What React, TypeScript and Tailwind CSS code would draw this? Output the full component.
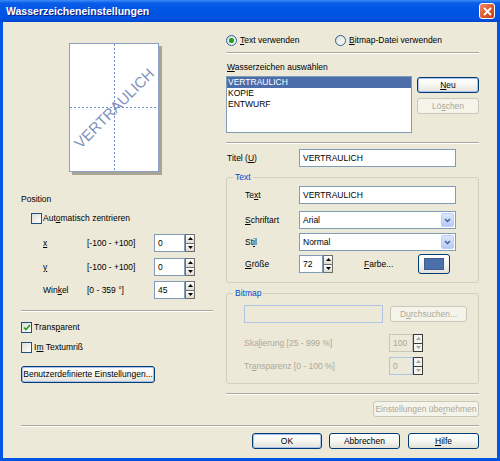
import React from "react";
import clsx from "clsx";

const U = ({ c }: { c: string }) => <span className="underline underline-offset-1">{c}</span>;

function Btn({
  children,
  className = "",
  disabled,
  focus,
}: {
  children: React.ReactNode;
  className?: string;
  disabled?: boolean;
  focus?: boolean;
}) {
  return (
    <div
      className={clsx(
        "flex items-center justify-center rounded-[3px] border whitespace-nowrap",
        disabled
          ? "border-[#C9C7BA] bg-[#F5F4EA] text-[#ACA899]"
          : "border-[#003C74] bg-gradient-to-b from-white via-[#F6F6F2] to-[#E2E1D8] text-black",
        focus && !disabled && "shadow-[inset_0_0_0_1px_#A9C3EE]",
        className
      )}
    >
      {children}
    </div>
  );
}

function Check({ checked }: { checked?: boolean }) {
  return (
    <div className="w-[11px] h-[11px] shrink-0 border border-[#1C5180] bg-gradient-to-br from-[#DCDCD7] to-white flex items-center justify-center">
      {checked && (
        <svg width="8" height="7" viewBox="0 0 8 7">
          <path d="M1 3.5L3 5.5L7 1" stroke="#21A121" strokeWidth="1.7" fill="none" />
        </svg>
      )}
    </div>
  );
}

function Radio({ checked }: { checked?: boolean }) {
  return (
    <div className="w-[11px] h-[11px] shrink-0 rounded-full border border-[#2F5E95] bg-gradient-to-br from-[#DCDCD7] to-white flex items-center justify-center">
      {checked && <div className="w-[5px] h-[5px] rounded-full bg-[#21A121] shadow-[0_0_1px_#7FD07F]" />}
    </div>
  );
}

function Spin({ disabled }: { disabled?: boolean }) {
  const box = disabled
    ? "border-[#3C3C3C] bg-[#F4F3EE]"
    : "border-[#707070] bg-gradient-to-b from-white to-[#DEDBCF]";
  const fill = disabled ? "#ACA899" : "#000";
  return (
    <div className="flex flex-col w-[10px] h-[18px] shrink-0">
      <div className={clsx("flex-1 border flex items-center justify-center", box)}>
        <svg width="5" height="3" viewBox="0 0 5 3">
          <path d="M2.5 0L5 3H0z" fill={fill} />
        </svg>
      </div>
      <div className={clsx("flex-1 border border-t-0 flex items-center justify-center", box)}>
        <svg width="5" height="3" viewBox="0 0 5 3">
          <path d="M0 0H5L2.5 3z" fill={fill} />
        </svg>
      </div>
    </div>
  );
}

function Select({ value }: { value: string }) {
  return (
    <div className="w-[157px] h-[18px] border border-[#7F9DB9] bg-white flex items-center pl-[3px]">
      <span className="flex-1">{value}</span>
      <div className="w-[13px] h-[14px] mr-[1px] rounded-[2px] border border-[#BCCEF5] bg-gradient-to-b from-[#DCE7FD] to-[#B6CAF6] flex items-center justify-center">
        <svg width="7" height="5" viewBox="0 0 7 5">
          <path d="M1 1L3.5 3.5L6 1" stroke="#4D6185" strokeWidth="1.5" fill="none" />
        </svg>
      </div>
    </div>
  );
}

function Sep({ className = "" }: { className?: string }) {
  return <div className={clsx("h-[2px] border-t border-b border-t-[#ACA899] border-b-white", className)} />;
}

function Field({ children, className = "" }: { children?: React.ReactNode; className?: string }) {
  return (
    <div className={clsx("h-[18px] border border-[#7F9DB9] bg-white flex items-center pl-[3px]", className)}>
      {children}
    </div>
  );
}

export default function App() {
  return (
    <div className="w-[500px] h-[461px] flex flex-col bg-[#0055E5] font-['Liberation_Sans',Arial,sans-serif] text-[8.5px] leading-[11px] text-black">
      {/* title bar */}
      <div className="h-[22px] shrink-0 flex items-center pl-[6px] pr-[5px] bg-[linear-gradient(180deg,#3D8CF8_0%,#0A5DE8_14%,#0055E5_50%,#0053E2_85%,#0046CC_100%)]">
        <span className="flex-1 text-white font-bold text-[10.5px] [text-shadow:1px_1px_0_#0A1E80]">
          Wasserzeicheneinstellungen
        </span>
        <div className="w-[16px] h-[16px] rounded-[3px] border border-white bg-gradient-to-br from-[#EE8A6A] via-[#E05A2E] to-[#C53A17] flex items-center justify-center">
          <svg width="9" height="9" viewBox="0 0 9 9">
            <path d="M1 1L8 8M8 1L1 8" stroke="white" strokeWidth="1.8" />
          </svg>
        </div>
      </div>

      {/* body */}
      <div className="flex-1 mx-[3px] mb-[3px] bg-[#ECE9D8] px-[18px] flex flex-col">
        <div className="h-[403px] flex gap-[13px]">
          {/* left column */}
          <div className="w-[192px] flex flex-col">
            <div className="mt-[21px] ml-[48px] w-[90px] h-[129px] relative bg-white border border-[#8A9EC4] shadow-[3px_3px_0_#A8A596]">
              <svg className="absolute inset-0" width="88" height="127">
                <line x1="44.5" y1="0" x2="44.5" y2="127" stroke="#6F8FCF" strokeDasharray="2 2" />
                <line x1="0" y1="63.5" x2="88" y2="63.5" stroke="#6F8FCF" strokeDasharray="2 2" />
              </svg>
              <span className="absolute left-1/2 top-1/2 -translate-x-1/2 -translate-y-1/2 -rotate-45 text-[15px] leading-[15px] text-[#8193BD] whitespace-nowrap">
                VERTRAULICH
              </span>
            </div>

            <div className="mt-[22px] h-[11px]">Position</div>

            <div className="mt-[8px] h-[11px] ml-[10px] flex items-center gap-[1px]">
              <Check />
              <span>
                Aut<U c="o" />matisch zentrieren
              </span>
            </div>

            {[
              { l: <U c="x" />, r: "[-100 - +100]", v: "0", mt: "mt-[10px]" },
              { l: <U c="y" />, r: "[-100 - +100]", v: "0", mt: "mt-[6px]" },
              {
                l: (
                  <>
                    Win<U c="k" />el
                  </>
                ),
                r: "[0 - 359 °]",
                v: "45",
                mt: "mt-[5px]",
              },
            ].map((row, i) => (
              <div key={i} className={clsx("h-[18px] flex items-center", row.mt)}>
                <span className="ml-[22px] w-[44px]">{row.l}</span>
                <span className="w-[67px]">{row.r}</span>
                <Field className="w-[31px]">{row.v}</Field>
                <Spin />
              </div>
            ))}

            <Sep className="mt-[11px]" />

            <div className="mt-[10px] h-[11px] flex items-center gap-[2px]">
              <Check checked />
              <span>
                Trans<U c="p" />arent
              </span>
            </div>
            <div className="mt-[9px] h-[11px] flex items-center gap-[2px]">
              <Check />
              <span>
                I<U c="m" /> Textumriß
              </span>
            </div>

            <Btn focus className="mt-[13px] w-[134px] h-[17px]">
              Benutzerdefinierte Einstellungen...
            </Btn>
          </div>

          {/* right column */}
          <div className="w-[253px] flex flex-col">
            <div className="mt-[13px] h-[11px] flex items-center">
              <div className="w-[109px] flex items-center gap-[3px]">
                <Radio checked />
                <span>
                  <U c="T" />ext verwenden
                </span>
              </div>
              <div className="flex items-center gap-[3px]">
                <Radio />
                <span>
                  <U c="B" />itmap-Datei verwenden
                </span>
              </div>
            </div>

            <Sep className="mt-[6px]" />

            <div className="mt-[8px] h-[11px] pl-[1px]">
              <U c="W" />asserzeichen auswählen
            </div>

            <div className="mt-[3px] flex">
              <div className="w-[186px] h-[57px] border border-[#7F9DB9] bg-white flex flex-col">
                <div className="h-[11px] pl-[1px] bg-[#4B6DAA] text-white">VERTRAULICH</div>
                <div className="h-[11px] pl-[1px]">KOPIE</div>
                <div className="h-[11px] pl-[1px]">ENTWURF</div>
              </div>
              <div className="ml-[5px] w-[62px] flex flex-col">
                <Btn focus className="mt-[1px] h-[16px]">
                  <U c="N" />eu
                </Btn>
                <Btn disabled className="mt-[5px] h-[16px]">
                  Lö<U c="s" />chen
                </Btn>
              </div>
            </div>

            <Sep className="mt-[9px]" />

            <div className="mt-[5px] h-[18px] flex items-center">
              <span className="w-[73px] pl-[1px]">
                Titel (<U c="U" />)
              </span>
              <Field className="w-[157px]">VERTRAULICH</Field>
            </div>

            <fieldset className="mt-[5px] border border-[#D0D0BF] rounded-[3px] pb-[9px]">
              <legend className="ml-[6px] px-[2px] h-[11px] text-[#0046D5]">Text</legend>
              <div className="mt-[3px] h-[18px] flex items-center">
                <span className="w-[72px] pl-[18px]">
                  Te<U c="x" />t
                </span>
                <Field className="w-[157px]">VERTRAULICH</Field>
              </div>
              <div className="mt-[7px] h-[18px] flex items-center">
                <span className="w-[72px] pl-[18px]">
                  <U c="S" />chriftart
                </span>
                <Select value="Arial" />
              </div>
              <div className="mt-[4px] h-[18px] flex items-center">
                <span className="w-[72px] pl-[18px]">
                  St<U c="i" />l
                </span>
                <Select value="Normal" />
              </div>
              <div className="mt-[4px] h-[18px] flex items-center">
                <span className="w-[72px] pl-[18px]">
                  <U c="G" />röße
                </span>
                <Field className="w-[24px]">72</Field>
                <Spin />
                <span className="ml-[31px] w-[54px]">
                  <U c="F" />arbe...
                </span>
                <Btn className="w-[32px] h-[20px]">
                  <div className="w-[20px] h-[12px] bg-[#4A6FA9] border border-[#3E5E92]" />
                </Btn>
              </div>
            </fieldset>

            <fieldset className="mt-[5px] border border-[#D0D0BF] rounded-[3px] pb-[8px]">
              <legend className="ml-[6px] px-[2px] h-[11px] text-[#0046D5]">Bitmap</legend>
              <div className="mt-[6px] h-[18px] pl-[17px] flex items-center">
                <div className="w-[139px] h-[18px] border border-[#AFC3E3] bg-[#ECE9D8]" />
                <Btn disabled className="ml-[7px] w-[77px] h-[16px]">
                  D<U c="u" />rchsuchen...
                </Btn>
              </div>
              <div className="mt-[11px] h-[18px] pl-[17px] flex items-center text-[#ACA899]">
                <span className="w-[145px]">
                  Ska<U c="l" />ierung [25 - 999 %]
                </span>
                <div className="w-[24px] h-[18px] border border-[#C9C7BA] pl-[3px] flex items-center">100</div>
                <Spin disabled />
              </div>
              <div className="mt-[5px] h-[18px] pl-[17px] flex items-center text-[#ACA899]">
                <span className="w-[145px]">
                  Tr<U c="a" />nsparenz [0 - 100 %]
                </span>
                <div className="w-[24px] h-[18px] border border-[#AFC3E3] pl-[3px] flex items-center">0</div>
                <Spin disabled />
              </div>
            </fieldset>

            <Sep className="mt-[9px]" />

            <Btn disabled className="mt-[6px] self-end w-[106px] h-[16px]">
              Einstellungen übe<U c="r" />nehmen
            </Btn>
          </div>
        </div>

        <Sep />

        <div className="mt-[6px] flex justify-end">
          <Btn focus className="w-[70px] h-[16px]">
            OK
          </Btn>
          <Btn className="ml-[7px] w-[71px] h-[16px]">Abbrechen</Btn>
          <Btn className="ml-[8px] w-[71px] h-[16px]">
            <U c="H" />ilfe
          </Btn>
        </div>
      </div>
    </div>
  );
}
